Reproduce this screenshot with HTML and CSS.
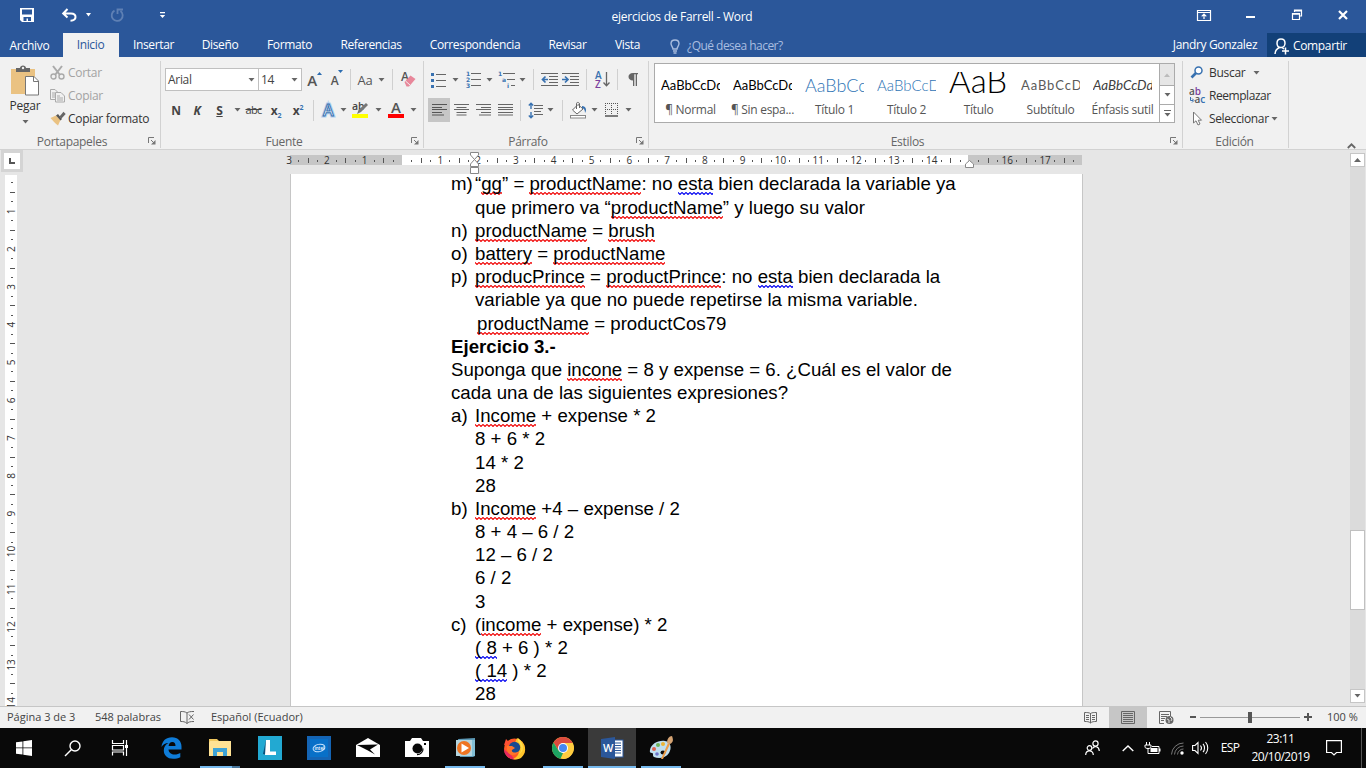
FILE: index.html
```html
<!DOCTYPE html>
<html lang="es">
<head>
<meta charset="utf-8">
<title>ejercicios de Farrell - Word</title>
<link rel="stylesheet" href="styles.css">
</head>
<body>
<svg width="0" height="0" class="defs">
  <symbol id="dd" viewBox="0 0 7 4"><path d="M0.5 0H6.5L3.5 3.6Z" fill="#666"/></symbol>
  <symbol id="launch" viewBox="0 0 8 8"><path d="M0.5 6V0.5H6M3 3L6.5 6.5" fill="none" stroke="#777"/><path d="M7.5 3V7.5H3Z" fill="#777"/></symbol>
</svg>
<div class="app">
  <header class="titlebar">
    <div class="quick">
      <svg class="q-save" width="14" height="14" viewBox="0 0 14 14"><path d="M0 0H14V14H2L0 12Z" fill="#fff"/><path d="M2 1.500H12V6.500H2ZM3.500 9H11V13H8V10.500H6.500V13H3.500Z" fill="#2b579a"/></svg>
      <svg class="q-undo" width="15" height="14" viewBox="0 0 15 14"><path d="M1 5.500H9C12 5.500 13.500 7 13.500 9C13.500 11 12 12.500 8.500 12.700M5.500 1L1.200 5.500L5.500 9.500" fill="none" stroke="#fff" stroke-width="2"/></svg>
      <svg class="q-dd" width="7" height="4" viewBox="0 0 7 4"><path d="M1 0H6L3.500 3.500Z" fill="#fff"/></svg>
      <svg class="q-redo" width="14" height="14" viewBox="0 0 14 14"><path d="M4.500 2.600A5.500 5.500 0 1 0 10.500 3M7.500 6V1.500H13" fill="none" stroke="#5f80b4" stroke-width="1.800"/></svg>
      <svg class="q-more" width="7" height="7" viewBox="0 0 7 7"><path d="M1 0H6V1.200H1ZM0.800 3H6.200L3.500 6Z" fill="#fff"/></svg>
    </div>
    <div class="title">ejercicios de Farrell - Word</div>
    <div class="winbtns">
      <svg width="14" height="12" viewBox="0 0 14 12"><path d="M0.500 1.500H13.500V11.500H0.500ZM0.500 3.500H13.500M7 10V5M4.700 7.300L7 5L9.300 7.300" fill="none" stroke="#fff" stroke-width="1.200"/></svg>
      <svg width="9" height="12" viewBox="0 0 9 12"><path d="M0 7H9V9H0Z" fill="#fff"/></svg>
      <svg width="10" height="12" viewBox="0 0 10 12"><path d="M2.500 3V1H9.500V7H8M0.500 4.500H7.500V10.500H0.500ZM2.500 1.800H9.500M0.500 5.200H7.500" fill="none" stroke="#fff" stroke-width="1.200"/></svg>
      <svg width="10" height="10" viewBox="0 0 10 10"><path d="M1 1L9 9M9 1L1 9" stroke="#fff" stroke-width="2.200"/></svg>
    </div>
  </header>
  <nav class="tabs">
    <span class="archivo">Archivo</span><span class="sel">Inicio</span><span>Insertar</span><span>Diseño</span><span>Formato</span><span>Referencias</span><span>Correspondencia</span><span>Revisar</span><span>Vista</span>
    <span class="ask"><svg width="10" height="15" viewBox="0 0 10 15"><path d="M3 10C3 8 1 7 1 4.600C1 2.400 2.800 1 5 1S9 2.400 9 4.600C9 7 7 8 7 10ZM3 12H7M3.500 14H6.500" fill="none" stroke="#a9bde0" stroke-width="1.400"/></svg>¿Qué desea hacer?</span>
    <span class="user">Jandry Gonzalez</span>
    <span class="share"><svg width="15" height="17" viewBox="0 0 15 17"><path d="M7 1C9.800 1 11 3 11 5.200S9.500 9.500 7 9.500S3 7.500 3 5.200S4.200 1 7 1ZM1 16C1.200 12.500 3 10.500 5.500 9.500M8 9.500L10 11M11.500 9.500V16.500M8 13H15" fill="none" stroke="#fff" stroke-width="1.500"/></svg>Compartir</span>
  </nav>

  <section class="ribbon">
    <div class="group">
      <div class="clip">
        <div class="paste">
          <svg width="30" height="31" viewBox="0 0 30 31"><rect x="1" y="4" width="24" height="25" fill="#eac282"/><path d="M6 3H10C10 -0.500 16 -0.500 16 3H20V7H6Z" fill="#666"/><circle cx="13" cy="3" r="1.200" fill="#f1f1f1"/><path d="M15.500 11.500H24L28.500 16V30H15.500Z" fill="#fff" stroke="#777"/><path d="M23.500 11.500V16.500H28.500" fill="none" stroke="#777"/></svg>
          <span>Pegar</span>
          <svg class="dd" width="7" height="4"><use href="#dd"/></svg>
        </div>
        <div class="cliplist">
          <div class="off"><svg width="15" height="15" viewBox="0 0 15 15"><path d="M3 1L10 10M12 1L5 10" stroke="#aaa" stroke-width="2"/><circle cx="3.500" cy="11.500" r="2.500" fill="none" stroke="#aaa" stroke-width="1.400"/><circle cx="11.500" cy="11.500" r="2.500" fill="none" stroke="#aaa" stroke-width="1.400"/></svg>Cortar</div>
          <div class="off"><svg width="15" height="15" viewBox="0 0 15 15"><path d="M0.500 1.500H5L7.500 4V11.500H0.500ZM2 5H5M2 7H5M2 9H5" fill="none" stroke="#aaa"/><path d="M5.500 4.500H11L14.500 8V14H5.500Z" fill="#f1f1f1" stroke="#aaa"/><path d="M7 8H10M7 10H13M7 12H13" stroke="#aaa"/></svg>Copiar</div>
          <div><svg width="16" height="15" viewBox="0 0 16 15"><path d="M0.500 7L6 4.500L10.500 9L8 14.500C5 12 3 10 0.500 7Z" fill="#eac282"/><path d="M6 4.500L8 3L12 8L10.500 9.500Z" fill="#555"/><path d="M9.500 5.500L13.500 0.800L15.700 3L11.500 7.500Z" fill="#666"/></svg>Copiar formato</div>
        </div>
      </div>
      <div class="label">Portapapeles<svg width="8" height="8"><use href="#launch"/></svg></div>
    </div>

    <div class="group">
      <div class="tools font1">
        <div class="combo">Arial<svg width="7" height="4"><use href="#dd"/></svg></div>
        <div class="combo size">14<svg width="7" height="4"><use href="#dd"/></svg></div>
        <span class="ga">A<svg width="5" height="3" viewBox="0 0 5 3"><path d="M0 3L2.500 0L5 3Z" fill="#2b6cb0"/></svg></span>
        <span class="ga sm">A<svg width="5" height="3" viewBox="0 0 5 3"><path d="M0 0H5L2.500 3Z" fill="#2b6cb0"/></svg></span>
        <i class="sep"></i><span class="aa">Aa</span><svg width="7" height="4"><use href="#dd"/></svg><i class="sep"></i>
        <svg width="16" height="17" viewBox="0 0 16 17"><text x="1" y="10" font-size="12" class="svgt" fill="#555">A</text><path d="M4.500 11L10.500 4.500L15.500 8L9 15.500H6.500Z" fill="#e8879a"/><path d="M5.500 10L10 14" stroke="#f1f1f1"/></svg>
      </div>
      <div class="tools font2">
        <b>N</b><b class="k">K</b><b class="u">S</b><svg width="7" height="4"><use href="#dd"/></svg><span class="abc">abc</span>
        <b>x<sub>2</sub></b><b>x<sup>2</sup></b><i class="sep"></i>
        <svg width="16" height="17" viewBox="0 0 16 17"><text x="2" y="14" font-size="16" class="svgt" fill="#fff" stroke="#b5d0ee" stroke-width="3">A</text><text x="2" y="14" font-size="16" class="svgt" fill="#fff" stroke="#3871b0" stroke-width="1">A</text></svg>
        <svg width="7" height="4"><use href="#dd"/></svg>
        <svg width="17" height="18" viewBox="0 0 17 18"><text x="0" y="9" font-size="10.500" class="svgt" fill="#444">ab</text><path d="M6.500 9L14 2L16 4L9 11L5 13Z" fill="#777"/><rect x="0" y="13" width="16" height="4" fill="#ff0"/></svg>
        <svg width="7" height="4"><use href="#dd"/></svg>
        <svg width="17" height="18" viewBox="0 0 17 18"><text x="3" y="12" font-size="15" class="svgt" fill="#555">A</text><rect x="0" y="13" width="16" height="4" fill="#f00"/></svg>
        <svg width="7" height="4"><use href="#dd"/></svg>
      </div>
      <div class="label">Fuente<svg width="8" height="8"><use href="#launch"/></svg></div>
    </div>

    <div class="group">
      <div class="tools para1">
        <svg width="15" height="16" viewBox="0 0 15 16"><path d="M5 2.500H15M5 8.500H15M5 14.500H15" stroke="#666"/><g fill="#3871b0"><rect y="1" width="3" height="3"/><rect y="7" width="3" height="3"/><rect y="13" width="3" height="3"/></g></svg>
        <svg width="7" height="4"><use href="#dd"/></svg>
        <svg width="15" height="17" viewBox="0 0 15 17"><path d="M5 2.500H15M5 8.500H15M5 14.500H15" stroke="#666"/><g class="tiny"><text x="0" y="5">1</text><text x="0" y="11">2</text><text x="0" y="17">3</text></g></svg>
        <svg width="7" height="4"><use href="#dd"/></svg>
        <svg width="17" height="17" viewBox="0 0 17 17"><path d="M5 2.500H17M9 8.500H17M13 14.500H17" stroke="#666"/><g class="tiny"><text x="0" y="5">1</text><text x="4" y="11">a</text><text x="9" y="17">i</text></g></svg>
        <svg width="7" height="4"><use href="#dd"/></svg><i class="sep"></i>
        <svg width="17" height="13" viewBox="0 0 17 13"><path d="M0 .5H17M8 3.500H17M8 6.500H17M8 9.500H17M0 12.500H17" stroke="#666"/><path d="M7 6.500H2M4.500 3.500L1.500 6.500L4.500 9.500" fill="none" stroke="#3871b0" stroke-width="1.700"/></svg>
        <svg width="17" height="13" viewBox="0 0 17 13"><path d="M0 .5H17M8 3.500H17M8 6.500H17M8 9.500H17M0 12.500H17" stroke="#666"/><path d="M0 6.500H5M3 3.500L6 6.500L3 9.500" fill="none" stroke="#3871b0" stroke-width="1.700"/></svg>
        <i class="sep"></i>
        <svg width="15" height="17" viewBox="0 0 15 17"><text x="0" y="8" font-size="10" class="svgt" fill="#3871b0">A</text><text x="0" y="17" font-size="10" class="svgt" fill="#7b3f9d">Z</text><path d="M11.500 1V14.500M8.500 11.500L11.500 14.800L14.500 11.500" fill="none" stroke="#666" stroke-width="1.300"/></svg>
        <i class="sep"></i>
        <svg width="10" height="13" viewBox="0 0 10 13"><path d="M5 0H10V1.300H9V13H7.700V1.300H6.300V13H5V7.500C-1 7.500 -1 0 5 0Z" fill="#666"/></svg>
      </div>
      <div class="tools para2">
        <span class="active"><svg width="15" height="12" viewBox="0 0 15 12"><path d="M0 .5H15M0 3.500H10M0 5.500H15M0 8.500H10M0 11H12" stroke="#555"/></svg></span>
        <svg width="15" height="12" viewBox="0 0 15 12"><path d="M0 .5H15M2.500 3.500H12.500M0 5.500H15M2.500 8.500H12.500M2.500 11H12.500" stroke="#666"/></svg>
        <svg width="15" height="12" viewBox="0 0 15 12"><path d="M0 .5H15M5 3.500H15M0 5.500H15M5 8.500H15M3 11H15" stroke="#666"/></svg>
        <svg width="15" height="12" viewBox="0 0 15 12"><path d="M0 .5H15M0 3.500H15M0 5.500H15M0 8.500H15M0 11H15" stroke="#666"/></svg>
        <i class="sep"></i>
        <svg width="15" height="17" viewBox="0 0 15 17"><path d="M6 3.500H15M6 6.500H15M6 9.500H13M6 12.500H15" stroke="#666"/><path d="M3 1V7M3 10V16M.8 3.500L3 1.200L5.200 3.500M.8 13.500L3 15.800L5.200 13.500" fill="none" stroke="#3871b0" stroke-width="1.400"/></svg>
        <svg width="7" height="4"><use href="#dd"/></svg><i class="sep"></i>
        <svg width="17" height="17" viewBox="0 0 17 17"><path d="M2.500 8L8 2.500L13 7L7 12Z" fill="#fff" stroke="#666"/><path d="M6.500 7V1.500C6.500 0 9.500 0 9.500 2V6" fill="none" stroke="#666"/><path d="M12 4C16 4 17 8 15 11C15 8 14 6.500 12 6Z" fill="#3871b0"/><rect x=".5" y="13.500" width="15" height="2.500" fill="#fff" stroke="#888"/></svg>
        <svg width="7" height="4"><use href="#dd"/></svg>
        <svg width="13" height="14" viewBox="0 0 13 14"><path d="M0 .5H13M0 6.500H13M.5 0V12M6.500 0V12M12.500 0V12" stroke="#555" stroke-dasharray="1 1" shape-rendering="crispEdges"/><path d="M0 13H13" stroke="#555" stroke-width="1.500"/></svg>
        <svg width="7" height="4"><use href="#dd"/></svg>
      </div>
      <div class="label">Párrafo<svg width="8" height="8"><use href="#launch"/></svg></div>
    </div>

    <div class="group">
      <div class="gallery">
        <div class="style"><p>AaBbCcDd</p><span>¶ Normal</span></div>
        <div class="style"><p>AaBbCcDd</p><span>¶ Sin espa...</span></div>
        <div class="style"><p class="t1">AaBbCc</p><span>Título 1</span></div>
        <div class="style"><p class="t2">AaBbCcD</p><span>Título 2</span></div>
        <div class="style"><p class="t3">AaB</p><span>Título</span></div>
        <div class="style"><p class="t4">AaBbCcD</p><span>Subtítulo</span></div>
        <div class="style"><p class="t5">AaBbCcDd</p><span>Énfasis sutil</span></div>
        <div class="gbtns">
          <i class="dis"><svg width="6" height="4" viewBox="0 0 6 4"><path d="M0 4L3 .5L6 4Z" fill="#bbb"/></svg></i>
          <i><svg width="7" height="4"><use href="#dd"/></svg></i>
          <i><svg width="7" height="7" viewBox="0 0 7 7"><path d="M0 0H7V1H0ZM.5 3H6.500L3.500 6.500Z" fill="#666"/></svg></i>
        </div>
      </div>
      <div class="label">Estilos<svg width="8" height="8"><use href="#launch"/></svg></div>
    </div>

    <div class="group">
      <div class="edit">
        <div><svg width="14" height="13" viewBox="0 0 14 13"><circle cx="8.500" cy="4.500" r="3.500" fill="#fff" stroke="#3871b0" stroke-width="1.500"/><path d="M6 7L1.500 11.500" stroke="#3871b0" stroke-width="2.600"/></svg>Buscar<svg class="far" width="7" height="4"><use href="#dd"/></svg></div>
        <div class="rep"><svg width="17" height="16" viewBox="0 0 17 16"><text x="0" y="7" font-size="10" class="svgt" fill="#555">a<tspan fill="#7b3f9d">b</tspan></text><text x="5.500" y="15" font-size="10" class="svgt" fill="#555">a<tspan fill="#3871b0">c</tspan></text><path d="M1.500 9V12.500H4M3 10.500L5 12.500L3 14.500" fill="none" stroke="#3871b0"/></svg>Reemplazar</div>
        <div><svg width="14" height="15" viewBox="0 0 14 15"><path d="M3.500 1V12L6 9.800L8 14L10 13L8.200 9.200H11.500Z" fill="#fff" stroke="#777"/></svg>Seleccionar<svg class="near" width="7" height="4"><use href="#dd"/></svg></div>
      </div>
      <div class="label">Edición</div>
    </div>
    <div class="collapse"><svg width="9" height="6" viewBox="0 0 9 6"><path d="M.8 5L4.500 1.300L8.200 5" fill="none" stroke="#666" stroke-width="1.800"/></svg></div>
  </section>

  <main class="work">
    <div class="left">
      <div class="tabsel"><svg width="6" height="6" viewBox="0 0 6 6"><path d="M1 0V5H6" fill="none" stroke="#555" stroke-width="2"/></svg></div>
      <svg id="vruler" width="12" height="531"></svg>
    </div>
    <div class="center">
      <svg id="hruler" width="796" height="24"></svg>
      <article class="page">
        <ul>
          <li><b>m)</b><div>“<u>gg</u>” = <u>productName</u>: no <u class="g">esta</u> bien declarada la variable ya<br>que primero va “<u>productName</u>” y luego su valor</div></li>
          <li><b>n)</b><div><u>productName</u> = <u>brush</u></div></li>
          <li><b>o)</b><div><u>battery</u> = <u>productName</u></div></li>
          <li><b>p)</b><div><u>producPrince</u> = <u>productPrince</u>: no <u class="g">esta</u> bien declarada la<br>variable ya que no puede repetirse la misma variable.</div></li>
        </ul>
        <p class="indent"><u>productName</u> = productCos79</p>
        <h1>Ejercicio 3.-</h1>
        <p>Suponga que <u>incone</u> = 8 y expense = 6. ¿Cuál es el valor de<br>cada una de las siguientes expresiones?</p>
        <ul>
          <li><b>a)</b><div><u>Income</u> + expense * 2<br>8 + 6 * 2<br>14 * 2<br>28</div></li>
          <li><b>b)</b><div><u>Income</u> +4 – expense / 2<br>8 + 4 – 6 / 2<br>12 – 6 / 2<br>6 / 2<br>3</div></li>
          <li><b>c)</b><div>(<u>income</u> + expense) * 2<br><u class="g">( 8</u> + 6 ) * 2<br><u class="g">( 14</u> ) * 2<br>28</div></li>
        </ul>
      </article>
    </div>
    <div class="scroll">
      <i><svg width="7" height="4" viewBox="0 0 7 4"><path d="M0 4L3.500 0L7 4Z" fill="#666"/></svg></i>
      <div class="thumb"></div>
      <i><svg width="7" height="4"><use href="#dd"/></svg></i>
    </div>
  </main>

  <footer class="status">
    <span class="s1">Página 3 de 3</span><span class="s2">548 palabras</span>
    <svg class="s3" width="15" height="13" viewBox="0 0 15 13"><path d="M7 2C5 .5 3 .5 .5 .5V10.500C3 10.500 5 10.500 7 12.500V2C8.500 .8 10 .5 14 .5M7 12.500C8.500 11 10 10.500 14 10.500M9 3.500L13.500 8.500M13.500 3.500L9 8.500" fill="none" stroke="#666"/></svg>
    <span>Español (Ecuador)</span>
    <div class="views">
      <span><svg width="13" height="13" viewBox="0 0 13 13"><path d="M.5 1.500C3 1.500 5 1.500 6.500 2.500C8 1.500 10 1.500 12.500 1.500V10.500C10 10.500 8 10.500 6.500 12C5 10.500 3 10.500 .5 10.500ZM6.500 2V12M2 4.500H5M2 6.500H5M2 8.500H5M8 4.500H11M8 6.500H11M8 8.500H11" fill="none" stroke="#666"/></svg></span>
      <span class="on"><svg width="14" height="13" viewBox="0 0 14 13"><path d="M.5 .5H13.500V12.500H.5ZM2 2.500H12M2 4.500H12M2 6.500H12M2 8.500H12M2 10.500H12" fill="none" stroke="#666"/></svg></span>
      <span><svg width="15" height="13" viewBox="0 0 15 13"><path d="M5 12.500H.5V.5H11.500V5M2 3.500H10M2 5.500H8M2 7.500H6M2 9.500H5" fill="none" stroke="#666"/><circle cx="10.500" cy="9" r="4" fill="#666"/><path d="M8 8L10 9L10 12M11 6L13 8L12 10" fill="none" stroke="#ddd"/></svg></span>
    </div>
    <div class="zoom"><i class="minus"></i><div class="track"><i></i></div><svg width="8" height="8" viewBox="0 0 8 8"><path d="M4 0V8M0 4H8" stroke="#555" stroke-width="2"/></svg></div>
    <span class="pct">100 %</span>
  </footer>

  <div class="taskbar">
    <span><svg width="16" height="16" viewBox="0 0 16 16"><path d="M0 2.300L6.500 1.400V7.500H0ZM7.300 1.300L16 0V7.500H7.300ZM0 8.300H6.500V14.600L0 13.700ZM7.300 8.300H16V16L7.300 14.700Z" fill="#fff"/></svg></span>
    <span><svg width="17" height="17" viewBox="0 0 17 17"><circle cx="11" cy="6" r="5" fill="none" stroke="#fff" stroke-width="1.400"/><path d="M7.500 9.500L1 16" stroke="#fff" stroke-width="1.500"/></svg></span>
    <span><svg width="17" height="16" viewBox="0 0 17 16"><path d="M.5 0V3.500H11.500V0M.5 15.500V12H11.500V15.500M.5 5.500H11.500V10H.5ZM14.500 0V16" fill="none" stroke="#fff" stroke-width="1.200"/><rect x="13" y="5" width="3" height="3" fill="#fff"/></svg></span>
    <span><svg width="21" height="22" viewBox="0 0 21 22"><path d="M0.500 10C1 4 5 .3 11 .3C17 .3 20.500 4.500 20.500 9.500V12.500H7.500C7.800 16 10.500 17.500 13.500 17.500C16 17.500 18 16.800 19.300 16V20.200C17 21.300 15 21.800 12 21.800C6 21.800 2.800 18 2.800 13.500C2.800 10 4.500 7.500 7.500 6C4.500 6 2 7.500 .5 10ZM7.600 9H14.500C14.500 6.500 13.500 5 11.300 5C9.300 5 8 6.500 7.600 9Z" fill="#0f7cd8"/></svg></span>
    <span class="run part"><svg width="22" height="19" viewBox="0 0 22 19"><path d="M0 1H8L10 3H21V18H0Z" fill="#f0c75e"/><path d="M1 3H22V18H0V5Z" fill="#ffe294"/><path d="M4 18V10H18V18H14V14H8V18Z" fill="#3ea3d6"/></svg></span>
    <span><svg width="24" height="24" viewBox="0 0 24 24"><rect width="24" height="24" fill="#22a9d2"/><path d="M8 4L5 18L9 19Z" fill="#08517b"/><path d="M8 4H12V15.500H18V19H7Z" fill="#fff"/></svg></span>
    <span><svg width="24" height="24" viewBox="0 0 24 24"><rect width="24" height="24" fill="#1464b4"/><rect x="3" y="3" width="18" height="18" fill="#0870c8"/><ellipse cx="12" cy="12" rx="6" ry="3.700" fill="none" stroke="#c9e4ff" transform="rotate(-12 12 12)"/><text x="7.500" y="13.800" font-size="4.500" class="svgt" fill="#fff">intel</text></svg></span>
    <span><svg width="24" height="20" viewBox="0 0 24 20"><path d="M0 7L12 0L24 7V19H0Z" fill="#fff"/><path d="M1 7L22 6.500L14 11.500L19 16.500L11 12Z" fill="#080808"/></svg></span>
    <span><svg width="24" height="20" viewBox="0 0 24 20"><path d="M0 3H5L7 0H16L18 3H24V19H0Z" fill="#fff"/><circle cx="12.500" cy="10.500" r="5" fill="#080808"/><path d="M18 10.500A5.800 5.800 0 0 1 12 16.700" fill="none" stroke="#080808" stroke-width="1.200"/><rect x="19" y="5" width="2" height="2" fill="#080808"/></svg></span>
    <span class="run"><svg width="21" height="20" viewBox="0 0 21 20"><path d="M3 1L20 0V18L18 19H5Z" fill="#5d9ab7"/><path d="M1 2H17V18H1Z" fill="#b4d5df"/><path d="M17 2H20V18H17Z" fill="#82bfd5"/><circle cx="9" cy="10" r="7" fill="#ef7421"/><path d="M6.500 5.500L14 10L6.500 14.500Z" fill="#fff"/></svg></span>
    <span><svg width="23" height="23" viewBox="0 0 23 23"><circle cx="11.500" cy="12" r="10.500" fill="#ff5a24"/><path d="M1 12A10.500 10.500 0 0 0 12 22.500L8 18L3 14Z" fill="#e5285f"/><path d="M14 1C23 5 25 15 18 21C16 22 13 23 10 22C18 19 17 10 12 6Z" fill="#ffc52a"/><path d="M1 8L3 2L6 5L9 2L10 7Z" fill="#ff4f35"/><circle cx="11.500" cy="10.500" r="5.700" fill="#184a91"/><path d="M4 9L9 9L12 11L9 13C8 15 12 17 16 14C14 20 5 19 4 13Z" fill="#ff742a"/><path d="M15 4C20 10 19 15 15 18C21 15 22 8 15 1Z" fill="#ffe04d"/></svg></span>
    <span class="run"><svg width="22" height="22" viewBox="0 0 22 22"><circle cx="11" cy="11" r="11" fill="#ffcd40"/><path d="M1.500 5.500A11 11 0 0 1 20.500 5.500L20.500 6H11L6.500 13.500Z" fill="#dc4b3e"/><path d="M1.500 5.500L6.500 13.500L11 16L8.500 21.800A11 11 0 0 1 1.500 5.500Z" fill="#1da462"/><path d="M11 6H20.500A11 11 0 0 1 10.500 22L15.500 13.500Z" fill="#ffcd40"/><circle cx="11" cy="11" r="5" fill="#fff"/><circle cx="11" cy="11" r="4" fill="#4688f1"/></svg></span>
    <span class="run cur"><svg width="23" height="22" viewBox="0 0 23 22"><rect x="11" y="3" width="11" height="17" fill="#fff" stroke="#2b579a"/><path d="M12 6H20M12 8.500H20M12 11H20M12 13.500H20M12 16H20" stroke="#2b579a" stroke-width="1.200"/><path d="M0 2L14 0V22L0 20Z" fill="#2b579a"/><text x="2" y="15" font-size="11" class="svgt" fill="#fff">W</text></svg></span>
    <span class="run"><svg width="25" height="24" viewBox="0 0 25 24"><path d="M1 14C2 8 9 4 16 5C22 6 23 12 20 17C17 22 10 23 5 21C3 20 5 17 3 17C1 17 .5 16 1 14Z" fill="#bfdff0"/><ellipse cx="14" cy="16.500" rx="2.500" ry="2" fill="#0a0a0a"/><circle cx="5" cy="13" r="2" fill="#df6251"/><circle cx="9" cy="9" r="2" fill="#6fb45b"/><circle cx="14" cy="8" r="2" fill="#edb434"/><circle cx="8" cy="18" r="1.800" fill="#6b74c8"/><path d="M12 23L19 7L21 8L14 23Z" fill="#ee9d48"/><path d="M18 7C18 3 20 0 23 0C24 3 25 6 21 8Z" fill="#d5a474"/></svg></span>
    <div class="tray">
      <span class="people"><svg width="15" height="16" viewBox="0 0 15 16"><g fill="none" stroke="#fff" stroke-width="1.200"><circle cx="4.500" cy="8" r="2.300"/><path d="M.7 15C.7 9.500 8.300 9.500 8.300 15"/><circle cx="10.500" cy="3.500" r="2.600"/><path d="M7.500 8.500C9 5.500 14 6 14.300 11"/></g></svg></span>
      <span><svg width="12" height="7" viewBox="0 0 12 7"><path d="M.7 6L6 .9L11.300 6" fill="none" stroke="#fff" stroke-width="1.400"/></svg></span>
      <span><svg width="16" height="13" viewBox="0 0 16 13"><path d="M1.500 0V3M4.500 0V3M0 3H6V5C6 7 0 7 0 5ZM3 6V11.500H14V4.500H7" fill="none" stroke="#fff"/><path d="M5.500 6H12.500V10H5.500ZM14 6.500H15.500V9.500H14Z" fill="#fff"/></svg></span>
      <span class="wifi"><svg width="13" height="13" viewBox="0 0 13 13"><g fill="none" stroke="#777"><path d="M.5 12.500A12 12 0 0 1 12.500 1"/><path d="M3.500 12.500A9 9 0 0 1 12.500 4"/><path d="M6.500 12.500A6 6 0 0 1 12.500 7"/></g><circle cx="11" cy="11" r="1.700" fill="#fff"/></svg></span>
      <span><svg width="17" height="14" viewBox="0 0 17 14"><path d="M.6 4.500H3L6 1.500V12.500L3 9.500H.6ZM8.500 4.500C9.700 6 9.700 8 8.500 9.500M11 2.800C13 5 13 9 11 11.200M13.500 1C16.500 4.500 16.500 9.500 13.500 13" fill="none" stroke="#fff" stroke-width="1.100"/></svg></span>
      <span class="esp">ESP</span>
      <span class="clock">23:11<br>20/10/2019</span>
      <span><svg width="16" height="16" viewBox="0 0 16 16"><path d="M.6 .6H15.400V12.500H10.500L8 15L5.500 12.500H.6Z" fill="none" stroke="#fff" stroke-width="1.200"/></svg></span>
      <span class="peek"></span>
    </div>
  </div>
</div>
<script src="script.js"></script>
</body>
</html>
```
FILE: styles.css
```css
* { box-sizing: border-box; }
body { margin: 0; font: 12px/16px "Open Sans", "Noto Sans", sans-serif; letter-spacing: -0.300px; color: #444; }
svg { display: block; flex: none; letter-spacing: 0; overflow: visible; }
i { font-style: normal; }
.defs { position: absolute; }
.svgt { font-family: "Open Sans", sans-serif; font-weight: 600; letter-spacing: 0; }
.app { width: 1366px; height: 768px; display: flex; flex-direction: column; overflow: hidden; }

.titlebar { height: 33px; background: #2b579a; color: #fff; display: grid; grid-template-columns: 500px 364px 1fr; }
.quick { display: flex; align-items: center; padding-left: 20px; height: 30px; }
.q-undo { margin-left: 28px; }
.q-dd { margin-left: 8px; }
.q-redo { margin-left: 18px; }
.q-more { margin-left: 35px; }
.title { text-align: center; padding-top: 9px; letter-spacing: -0.270px; }
.winbtns { display: grid; grid-template-columns: 46px 47px 46px 46px; justify-content: end; place-items: center; height: 30px; }

.tabs { height: 24px; background: #2b579a; color: #fff; display: grid; grid-template-columns: 63px 56px 69px 64px 75px 88px 120px 65px 55px 1fr 100px 99px; letter-spacing: -0.350px; }
.tabs > span { text-align: center; line-height: 24px; }
.tabs .archivo { padding-right: 4px; line-height: 26px; letter-spacing: -0.250px; }
.tabs .sel { background: #f1f1f1; color: #2b579a; padding-right: 1px; }
.tabs .ask { display: flex; align-items: center; gap: 7px; color: #a9bde0; padding-left: 15px; letter-spacing: -0.530px; }
.tabs .user { padding-right: 4px; }
.tabs .share { background: #124078; display: flex; align-items: center; gap: 4px; padding-left: 7px; }

.ribbon { height: 93px; background: #f1f1f1; border-bottom: 1px solid #d2d2d2; display: grid; grid-template-columns: 161px 263px 225px 534px 106px 1fr; padding: 4px 0 4px; }
.group { border-right: 1px solid #d2d2d2; display: flex; flex-direction: column; min-width: 0; }
.label { margin-top: auto; height: 18px; line-height: 23px; display: grid; grid-template-columns: 1fr 8px; gap: 4px; text-align: center; padding-right: 4px; color: #666; }
.label svg { margin-top: 7px; }
.group:nth-child(5) .label { padding: 0 2px 0 0; grid-template-columns: 1fr; }
.clip { display: grid; grid-template-columns: 49px 1fr; }
.paste { display: flex; flex-direction: column; align-items: center; padding-top: 4px; padding-left: 1px; color: #333; letter-spacing: -0.200px; }
.paste span { margin: 2px 0 6px; }
.cliplist > div { display: flex; align-items: center; height: 23px; gap: 2px; padding-left: 1px; color: #333; }
.cliplist .off { color: #a3a3a3; gap: 3px; }

.tools { display: grid; place-items: center; }
.tools .sep { width: 1px; height: 21px; background: #d0d0d0; }
.font1, .font2, .para1, .para2 { padding-left: 4px; }
.font1 { height: 23px; margin-top: 7px; grid-template-columns: 94px 43px 24px 21px 7px 23px 8px 15px 16px; justify-content: start; }
.font2 { height: 24px; margin-top: 7px; grid-template-columns: 22px 20px 25px 10px 23px 22px 22px 9px 21px 9px 25px 10px 26px 9px; justify-content: start; }
.para1 { height: 23px; margin-top: 7px; grid-template-columns: 21px 13px 22px 11px 23px 8px 15px 17px 25px 7px 24px 6px 26px; justify-content: start; }
.para2 { height: 24px; margin-top: 7px; grid-template-columns: 22px 22px 22px 22px 9px 20px 11px 13px 19px 13px 20px 15px; justify-content: start; }
.combo { width: 100%; height: 23px; background: #fff; border: 1px solid #c0c0c0; display: flex; align-items: center; justify-content: space-between; padding: 0 3px 0 2px; }
.combo.size { border-left: 0; }
.ga { display: flex; font-size: 15px; font-weight: 600; color: #555; padding-left: 1px; }
.ga.sm { font-size: 12px; padding-top: 3px; }
.ga.sm svg { margin-top: -3px; }
.aa { font-size: 13px; color: #555; padding-right: 1px; }
.font2 b { color: #444; font-size: 12px; line-height: 15px; }
.font2 .k { font-style: italic; }
.font2 .u { text-decoration: underline; }
.font2 .abc { text-decoration: line-through; font-size: 11px; letter-spacing: -0.700px; }
.font2 sub, .font2 sup { font-size: 7px; color: #3871b0; line-height: 0; }
.tiny text { font: bold 6px "DejaVu Sans", sans-serif; fill: #3871b0; }
.active { width: 22px; height: 24px; background: #c6c6c6; display: grid; place-items: center; }

.gallery { margin: 2px 0 0 5px; width: 521px; height: 60px; border: 1px solid #ababab; background: #fff; display: grid; grid-template-columns: repeat(7, 72px) 1fr; }
.style { min-width: 0; text-align: center; color: #555; overflow: hidden; }
.style p { margin: 8px 7px 0 6px; height: 26px; overflow: hidden; white-space: nowrap; text-align: left; color: #000; font: 13px/27px Lato, sans-serif; letter-spacing: 0; }
.style span { display: block; margin-top: 4px; padding-right: 1px; white-space: nowrap; }
.style .t1 { font-size: 18px; font-weight: 300; color: #2e74b5; line-height: 27px; }
.style .t2 { font-size: 15px; font-weight: 300; color: #2e74b5; line-height: 26px; }
.style .t3 { font-size: 33px; font-weight: 300; line-height: 17px; }
.style .t4 { color: #5a5a5a; letter-spacing: 0.900px; }
.style .t5 { color: #404040; font-style: italic; font-size: 13.400px; }
.gbtns { border-left: 1px solid #ababab; display: grid; grid-template-rows: 21px 19px 18px; }
.gbtns i { display: grid; place-items: center; border-top: 1px solid #ababab; }
.gbtns i.dis { background: #e6e6e6; border-top: 0; }
.edit > div { height: 23px; display: flex; align-items: center; color: #333; padding-left: 7px; gap: 5px; }
.edit > div.rep { padding-left: 6px; gap: 3px; letter-spacing: -0.450px; }
.edit > div:last-child { letter-spacing: -0.370px; }
.edit .near { margin-left: -3px; }
.edit .far { margin-left: 3px; }
.collapse { display: flex; justify-content: flex-end; align-items: flex-end; padding: 0 10px 0 0; }
.collapse svg { margin-bottom: -1px; }

.work { height: 556px; background: #e6e6e6; display: grid; grid-template-columns: 22px 1fr 16px; }
.left { padding-top: 0; }
.tabsel { width: 22px; height: 22px; border: 3px solid #d4d4d4; background: #fff; display: grid; place-items: center; margin-left: 1px; }
#vruler { margin: 3px 0 0 5px; background: #fff; overflow: hidden; }
.center { padding-left: 264px; overflow: hidden; }
.page { width: 793px; height: 532px; margin-left: 4px; background: #fff; border: solid #c6c6c6; border-width: 0 1px; padding-left: 160px; overflow: hidden; color: #000; font: 18.670px/23.170px "Liberation Sans", Arial, sans-serif; letter-spacing: 0; white-space: nowrap; }
.page ul { list-style: none; margin: 0; padding: 0; }
.page ul:first-child { margin-top: -2.200px; }
.page ul:first-child li:first-child { line-height: 23.870px; margin-bottom: -0.700px; }
.page li { display: grid; grid-template-columns: 24px 1fr; }
.page li b { font-weight: 400; }
.page p, .page h1 { margin: 0; font-size: inherit; }
.page .indent { padding-left: 26px; }
.page u { text-decoration: none; padding-bottom: 1px; background: url("data:image/svg+xml,%3Csvg xmlns='http://www.w3.org/2000/svg' width='4' height='3'%3E%3Cpath d='M-1 -.5L2 2.500L5 -.5' fill='none' stroke='%23f00000' stroke-width='1.100'/%3E%3C/svg%3E") repeat-x left bottom; }
.page u.g { background-image: url("data:image/svg+xml,%3Csvg xmlns='http://www.w3.org/2000/svg' width='4' height='3'%3E%3Cpath d='M-1 -.5L2 2.500L5 -.5' fill='none' stroke='%230000f0' stroke-width='1.100'/%3E%3C/svg%3E"); }
.scroll { margin: 3px 1px 3px 0; background: #dbdbdb; display: grid; grid-template-rows: 14px 363px 80px 1fr 14px; }
.scroll i { background: #fff; border: 1px solid #c6c6c6; display: grid; place-items: center; }
.scroll .thumb { grid-row: 3; background: #fff; border: 1px solid #c0c0c0; }
.scroll i:last-child { grid-row: 5; }

.status { height: 22px; background: #f1f1f1; border-top: 1px solid #c6c6c6; display: flex; align-items: center; font-size: 11px; line-height: 20px; letter-spacing: 0; padding-left: 7px; padding-bottom: 1px; }
.s1 { width: 88px; }
.s2 { width: 85px; }
.s3 { margin-right: 16px; }
.views { margin-left: auto; display: grid; grid-template-columns: 38px 38px 38px; height: 21px; }
.views span { display: grid; place-items: center; }
.views .on { background: #c6c6c6; }
.zoom { display: flex; align-items: center; margin-left: 5px; }
.minus { width: 6px; height: 2px; background: #555; }
.track { width: 100px; height: 1px; background: #999; margin: 0 4px; display: flex; align-items: center; justify-content: center; }
.track i { flex: none; width: 4px; height: 11px; background: #555; }
.pct { width: 54px; padding-left: 15px; white-space: nowrap; }

.taskbar { height: 40px; background: #090909; display: grid; grid-template-columns: 48px 48px 51px repeat(11, 49px) 1fr; color: #fff; }
.taskbar > span { display: flex; align-items: center; justify-content: center; border: solid transparent; border-width: 2px 0; }
.taskbar > span:nth-child(3) { padding-right: 3px; }
.taskbar .run { border-bottom-color: #76b9ed; margin: 0 5px 0 4px; }
.taskbar .part { border-image: linear-gradient(90deg, #76b9ed 78%, #48759a 78%) 2; border-width: 0 0 2px; }
.taskbar .cur { margin: 0 1px 0 0; background: #3a3a3a; border-top-color: #3a3a3a; }
.tray { display: grid; grid-template-columns: 36px 27px 24px 22px 27px 34px 67px 38px 13px; justify-content: end; }
.tray span { display: grid; place-items: center; white-space: nowrap; }
.tray .people { padding-right: 8px; }
.tray .wifi { padding-left: 3px; }
.tray .esp { font-size: 12px; letter-spacing: -0.600px; padding-right: 2px; }
.tray .clock { display: block; text-align: center; line-height: 18px; padding: 2px 2px 0 0; letter-spacing: -0.550px; }
.tray .peek { border-right: 1px solid #555; margin-right: 4px; }
.ruler-n { font: 10px "Open Sans", sans-serif; fill: #333; text-anchor: middle; }
```
FILE: script.js
```js
const NS = 'http://www.w3.org/2000/svg';
const STEP = 37.8;

function add(parent, name, attrs, text) {
  const el = document.createElementNS(NS, name);
  for (const key in attrs) el.setAttribute(key, attrs[key]);
  if (text !== undefined) el.textContent = text;
  parent.appendChild(el);
  return el;
}

// Horizontal ruler: zero mark 116.5px from the left edge of the strip.
const h = document.getElementById('hruler');
add(h, 'rect', { x: 4, y: 5, width: 792, height: 10, fill: '#c6c6c6' });
add(h, 'rect', { x: 116, y: 5, width: 566, height: 10, fill: '#fff' });
for (let q = -12; q <= 71; q++) {
  const x = 116.5 + q * STEP / 4;
  const n = Math.abs(q / 4);
  if (q % 4 === 0) {
    if (n !== 0 && n !== 15) add(h, 'text', { x: x, y: 14, class: 'ruler-n' }, n);
  } else {
    const tall = q % 2 === 0;
    add(h, 'rect', { x: Math.round(x - 0.5), y: tall ? 8 : 10, width: 1, height: tall ? 5 : 2, fill: '#555' });
  }
}
const marker = { fill: '#fff', stroke: '#888' };
add(h, 'path', { d: 'M184.500 2.500H192.500V5L188.500 9.500L184.500 5ZM184.500 16.500V14L188.500 9.500L192.500 14V16.500Z', ...marker });
add(h, 'path', { d: 'M184.500 17.500H192.500V23.500H184.500Z', ...marker });
add(h, 'path', { d: 'M679.500 17.500V14L683.500 10.500L687.500 14V17.500Z', ...marker });

// Vertical ruler: numbers are turned a quarter to the left.
const v = document.getElementById('vruler');
for (let q = 1; q <= 56; q++) {
  const y = -1.5 + q * STEP / 4;
  if (q % 4 === 0) {
    add(v, 'text', { transform: 'translate(10 ' + y + ') rotate(-90)', class: 'ruler-n' }, q / 4);
  } else {
    const tall = q % 2 === 0;
    add(v, 'rect', { x: tall ? 5 : 6, y: Math.round(y - 0.5), width: tall ? 5 : 2, height: 1, fill: '#555' });
  }
}
```
